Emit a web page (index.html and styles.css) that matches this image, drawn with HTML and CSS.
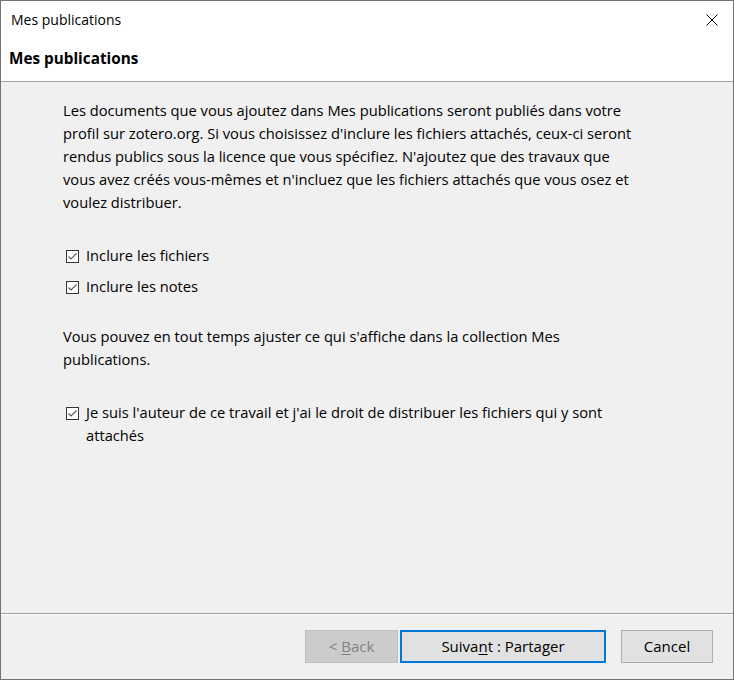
FILE: index.html
```html
<!DOCTYPE html>
<html lang="fr">
<head>
<meta charset="utf-8">
<title>Mes publications</title>
<link rel="stylesheet" href="styles.css">
</head>
<body>
<div class="window">
  <div class="titlebar">
    <span class="title">Mes publications</span>
    <svg class="close" width="12" height="12" viewBox="0 0 12 12"><path d="M0.5 0.5L11.5 11.5M11.5 0.5L0.5 11.5" stroke="#000" stroke-width="1" fill="none"/></svg>
  </div>
  <div class="header">Mes publications</div>
  <div class="content">
    <p class="text">Les documents que vous ajoutez dans Mes publications seront publiés dans votre<br>profil sur zotero.org. Si vous choisissez d'inclure les fichiers attachés, ceux-ci seront<br>rendus publics sous la licence que vous spécifiez. N'ajoutez que des travaux que<br>vous avez créés vous-mêmes et n'incluez que les fichiers attachés que vous osez et<br>voulez distribuer.</p>
    <div class="checks">
      <label class="check"><span class="box"><svg width="11" height="11" viewBox="0 0 11 11"><path d="M1.5 5.5L4 8L9.5 2.5" stroke="#555" stroke-width="1.1" fill="none"/></svg></span><span>Inclure les fichiers</span></label>
      <label class="check"><span class="box"><svg width="11" height="11" viewBox="0 0 11 11"><path d="M1.5 5.5L4 8L9.5 2.5" stroke="#555" stroke-width="1.1" fill="none"/></svg></span><span>Inclure les notes</span></label>
    </div>
    <p class="text note">Vous pouvez en tout temps ajuster ce qui s'affiche dans la collection Mes<br>publications.</p>
    <label class="check author"><span class="box"><svg width="11" height="11" viewBox="0 0 11 11"><path d="M1.5 5.5L4 8L9.5 2.5" stroke="#555" stroke-width="1.1" fill="none"/></svg></span><span>Je suis l'auteur de ce travail et j'ai le droit de distribuer les fichiers qui y sont<br>attachés</span></label>
  </div>
  <div class="footer">
    <button class="btn btn-back" disabled>&lt; <u>B</u>ack</button>
    <button class="btn btn-next">Suiva<u>n</u>t : Partager</button>
    <button class="btn btn-cancel">Cancel</button>
  </div>
</div>
</body>
</html>
```
FILE: styles.css
```css
* { box-sizing: border-box; }
html, body { margin: 0; padding: 0; }
body {
  font-family: "Open Sans", "Noto Sans", sans-serif;
  color: #000;
  background: #fff;
}
.window {
  width: 734px;
  height: 680px;
  border: 1px solid #737373;
  display: flex;
  flex-direction: column;
  background: #f0f0f0;
}
.titlebar {
  height: 37px;
  background: #fff;
  display: flex;
  align-items: center;
  justify-content: space-between;
  padding: 0 15px 0 10px;
}
.title {
  font-size: 14px;
  color: #000;
}
.close { display: block; }
.header {
  height: 44px;
  background: #fff;
  border-bottom: 1px solid #a0a0a0;
  font-size: 15.3px;
  font-weight: 700;
  padding: 10px 0 0 8px;
  line-height: 21px;
}
.content {
  flex: 1;
  padding: 17px 20px 0 62px;
  font-size: 14.7px;
  line-height: 23px;
}
.text { margin: 0; white-space: nowrap; }
.checks {
  margin-top: 30px;
  display: flex;
  flex-direction: column;
  gap: 8px;
}
.check {
  display: flex;
  align-items: flex-start;
  gap: 7px;
  white-space: nowrap;
}
.box {
  width: 13px;
  height: 13px;
  border: 1px solid #333;
  background: #fff;
  margin: 6px 0 0 3px;
  flex: none;
  display: flex;
  align-items: center;
  justify-content: center;
}
.box svg { display: block; }
.note { margin-top: 27px; }
.author { margin-top: 30px; }
.footer {
  height: 66px;
  border-top: 1px solid #a0a0a0;
  box-shadow: inset 0 1px 0 #fff;
  display: flex;
  align-items: flex-start;
  padding: 16px 20px 0 0;
  justify-content: flex-end;
}
.btn {
  font-family: inherit;
  font-size: 15px;
  height: 33px;
  background: #e1e1e1;
  border: 1px solid #adadad;
  color: #000;
  padding: 0 0 1px;
}
.btn-back {
  width: 93px;
  background: #cccccc;
  border-color: #bfbfbf;
  color: #838383;
}
.btn-next {
  width: 206px;
  margin-left: 2px;
  border: 2px solid #0078d7;
}
.btn-cancel {
  width: 92px;
  margin-left: 15px;
}
u { text-underline-offset: 2px; }
```
